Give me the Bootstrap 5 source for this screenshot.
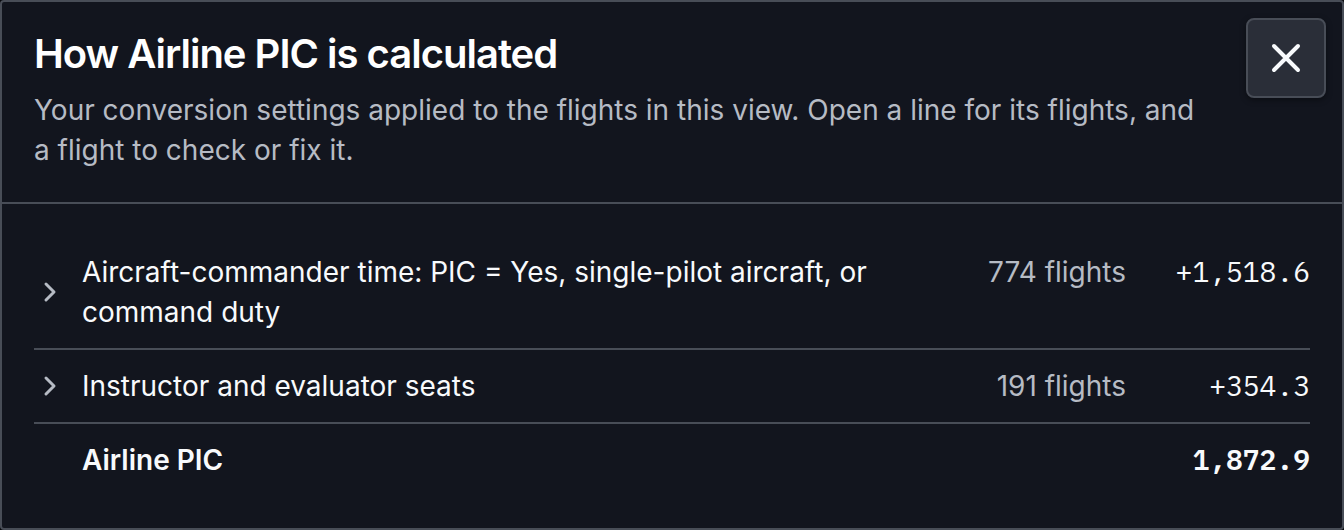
<!DOCTYPE html>
<html lang="en" data-bs-theme="dark">
<head>
<meta charset="utf-8">
<meta name="viewport" content="width=device-width, initial-scale=1">
<title>How Airline PIC is calculated</title>
<link href="https://cdn.jsdelivr.net/npm/bootstrap@5.3.0/dist/css/bootstrap.min.css" rel="stylesheet">
<style>
  :root { --panel: #12151e; --line: #484d57; --ink: #f8fafc; --soft: #b6bbc4; }
  body { background: #05070b; color: var(--ink); font: 400 28px/40px Inter, "Liberation Sans", sans-serif; }
  .panel { background: var(--panel); border: 2px solid var(--line); border-radius: 4px; }
  .panel-head { padding: 16px 16px 32px 32px; gap: 32px; border-bottom: 2px solid var(--line); }
  .panel-title { font-size: 40px; line-height: 40px; font-weight: 600; letter-spacing: -1px; margin-bottom: 16px; }
  .soft { color: var(--soft); }
  .close-btn { width: 80px; height: 80px; background: #2a2e38; border: 2px solid var(--line); border-radius: 8px; color: var(--ink); box-shadow: 0 2px 6px rgba(0, 0, 0, .4); }
  .close-btn:hover { background: #343944; border-color: var(--line); color: var(--ink); }
  .panel-body { padding: 32px; }
  .line-row { padding: 16px 0; gap: 16px; background: none; border: 0; color: inherit; }
  .lines > li + li { border-top: 2px solid var(--line); }
  .chevron { width: 32px; height: 32px; }
  .amount { width: 168px; font-family: "IBM Plex Mono", "Liberation Mono", monospace; }
</style>
</head>
<body>
<section class="panel" role="dialog" aria-labelledby="panel-title">
  <header class="panel-head d-flex align-items-start">
    <div class="flex-grow-1 pt-3">
      <h1 class="panel-title" id="panel-title">How Airline PIC is calculated</h1>
      <p class="soft mb-0">Your conversion settings applied to the flights in this view. Open a line for its flights, and a flight to check or fix it.</p>
    </div>
    <button type="button" class="btn close-btn flex-shrink-0 d-flex align-items-center justify-content-center p-0" aria-label="Close">
      <svg width="32" height="32" viewBox="0 0 32 32" fill="none" stroke="currentColor" stroke-width="4" stroke-linecap="round" aria-hidden="true"><path d="M4 4 28 28M28 4 4 28"/></svg>
    </button>
  </header>
  <div class="panel-body">
    <ul class="lines list-unstyled mb-0">
      <li>
        <button type="button" class="line-row d-flex align-items-center w-100 text-start" aria-expanded="false">
          <svg class="chevron soft flex-shrink-0" viewBox="0 0 32 32" fill="none" stroke="currentColor" stroke-width="3" stroke-linecap="round" stroke-linejoin="round" aria-hidden="true"><path d="M12 8l8 8-8 8"/></svg>
          <span class="flex-grow-1">Aircraft-commander time: PIC = Yes, single-pilot aircraft, or command duty</span>
          <span class="soft text-nowrap align-self-start">774 flights</span>
          <span class="amount flex-shrink-0 text-end align-self-start">+1,518.6</span>
        </button>
      </li>
      <li>
        <button type="button" class="line-row d-flex align-items-center w-100 text-start" aria-expanded="false">
          <svg class="chevron soft flex-shrink-0" viewBox="0 0 32 32" fill="none" stroke="currentColor" stroke-width="3" stroke-linecap="round" stroke-linejoin="round" aria-hidden="true"><path d="M12 8l8 8-8 8"/></svg>
          <span class="flex-grow-1">Instructor and evaluator seats</span>
          <span class="soft text-nowrap align-self-start">191 flights</span>
          <span class="amount flex-shrink-0 text-end align-self-start">+354.3</span>
        </button>
      </li>
      <li class="line-row d-flex fw-semibold">
        <span class="chevron flex-shrink-0"></span>
        <span class="flex-grow-1">Airline PIC</span>
        <span class="amount flex-shrink-0 text-end">1,872.9</span>
      </li>
    </ul>
  </div>
</section>
<script src="https://cdn.jsdelivr.net/npm/bootstrap@5.3.0/dist/js/bootstrap.bundle.min.js"></script>
</body>
</html>
